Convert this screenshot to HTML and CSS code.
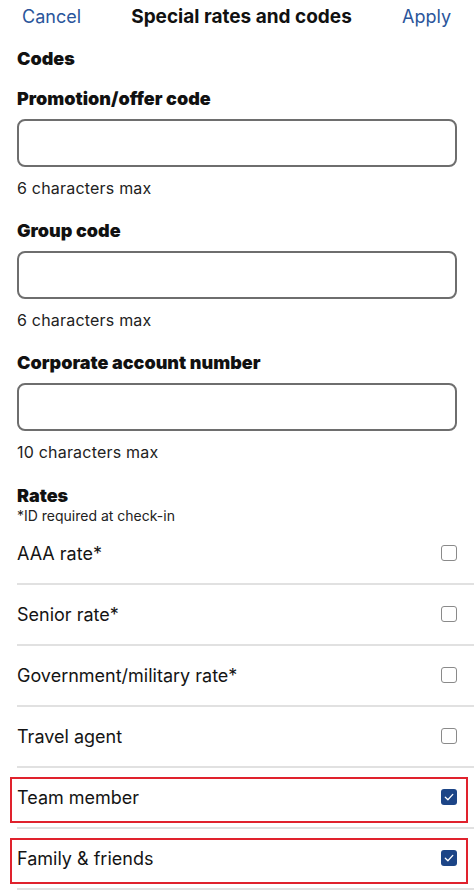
FILE: index.html
```html
<!DOCTYPE html>
<html lang="en">
<head>
<meta charset="utf-8">
<title>Special rates and codes</title>
<link rel="stylesheet" href="styles.css">
</head>
<body>
<header class="topbar">
  <span class="nav-btn">Cancel</span>
  <span class="title">Special rates and codes</span>
  <span class="nav-btn">Apply</span>
</header>
<main class="content">
  <h2 class="group-title">Codes</h2>
  <section class="field">
    <h3 class="field-label">Promotion/offer code</h3>
    <div class="input"></div>
    <p class="hint">6 characters max</p>
  </section>
  <section class="field">
    <h3 class="field-label">Group code</h3>
    <div class="input"></div>
    <p class="hint">6 characters max</p>
  </section>
  <section class="field">
    <h3 class="field-label">Corporate account number</h3>
    <div class="input"></div>
    <p class="hint">10 characters max</p>
  </section>
  <h2 class="group-title rates-title">Rates</h2>
  <p class="note">*ID required at check-in</p>
</main>
<ul class="rates">
  <li class="rate"><span>AAA rate*</span><span class="box"></span></li>
  <li class="rate"><span>Senior rate*</span><span class="box"></span></li>
  <li class="rate"><span>Government/military rate*</span><span class="box"></span></li>
  <li class="rate"><span>Travel agent</span><span class="box"></span></li>
  <li class="rate highlight"><span>Team member</span><span class="box checked"><svg viewBox="0 0 16 16" width="16" height="16"><path d="M4.3 8.3 L6.9 10.8 L11.8 5.4" fill="none" stroke="#fff" stroke-width="1.3" stroke-linecap="round" stroke-linejoin="round"/></svg></span></li>
  <li class="rate highlight"><span>Family &amp; friends</span><span class="box checked"><svg viewBox="0 0 16 16" width="16" height="16"><path d="M4.3 8.3 L6.9 10.8 L11.8 5.4" fill="none" stroke="#fff" stroke-width="1.3" stroke-linecap="round" stroke-linejoin="round"/></svg></span></li>
</ul>
</body>
</html>
```

FILE: styles.css
```css
* { box-sizing: border-box; }
html, body { margin: 0; padding: 0; background: #fff; }
body {
  font-family: Inter, "Noto Sans", "Liberation Sans", sans-serif;
  color: #141414;
  width: 474px;
  overflow: hidden;
}
.topbar {
  display: flex;
  align-items: center;
  justify-content: space-between;
  height: 34px;
  padding: 0 23px 0 22px;
  font-size: 18px;
  line-height: 34px;
}
.nav-btn { color: #2a559b; font-weight: 400; }
.title { font-weight: 700; color: #111; font-size: 19px; }

.content { padding: 0 17px 0 17px; }
.group-title {
  margin: 13px 0 0;
  font-size: 18px;
  line-height: 24px;
  font-weight: 900;
  color: #111;
}
.field { margin-top: 15.5px; }
.field + .field { margin-top: 21px; }
.field-label {
  margin: 0 0 8px;
  font-size: 18px;
  line-height: 24px;
  font-weight: 900;
  color: #111;
}
.input {
  height: 48px;
  border: 2px solid #6e6e6e;
  border-radius: 8px;
}
.hint {
  margin: 11px 0 0;
  font-size: 16px;
  line-height: 20px;
  color: #222;
  letter-spacing: 0.2px;
}
.rates-title { margin-top: 22px; }
.note {
  margin: 0;
  font-size: 14px;
  line-height: 16px;
  color: #222;
}
.rates {
  list-style: none;
  margin: 0 0 0 17px;
  padding: 0;
}
.rate {
  position: relative;
  display: flex;
  align-items: center;
  justify-content: space-between;
  height: 61px;
  padding-right: 17px;
  border-bottom: 2px solid #e1e1e1;
  font-size: 18px;
  color: #141414;
}
.box {
  width: 16px;
  height: 16px;
  border: 1.5px solid #8a8a8a;
  border-radius: 3px;
  display: flex;
}
.box.checked {
  border: none;
  background: #1c4587;
}
.highlight::after {
  content: "";
  position: absolute;
  left: -7px;
  right: 6px;
  top: 9px;
  height: 42px;
  border: 2px solid #e0222d;
  pointer-events: none;
}
```
